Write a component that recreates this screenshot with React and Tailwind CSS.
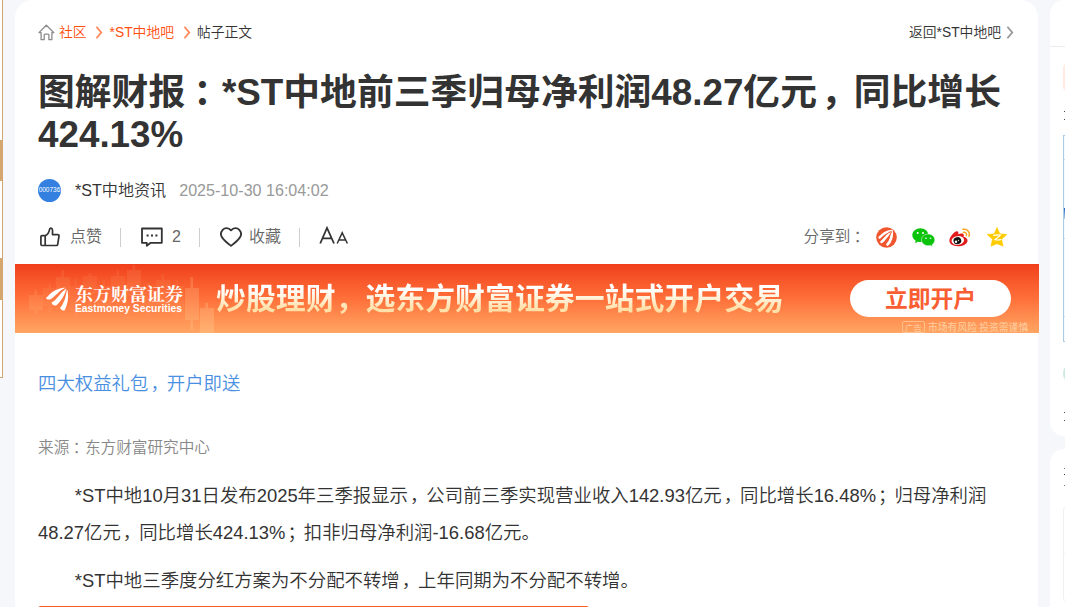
import React from 'react'

// full-width punctuation sits nearer the middle of its box
function Text({ children }) {
  return children.split(/([，：；])/).map((part, i) => {
    if (part === '：') {
      return (
        <span key={i} className="inline-block w-[1em] pl-[0.22em] indent-0 tracking-[-0.22em]">
          {part}
        </span>
      )
    }
    if (part === '，' || part === '；') {
      return (
        <span key={i} className="inline-block w-[1em] pl-[0.11em] indent-0 tracking-[-0.11em]">
          {part}
        </span>
      )
    }
    return part
  })
}

function Chevron({ className }) {
  return (
    <svg viewBox="0 0 8 14" className={className} fill="none" stroke="currentColor" strokeWidth="2">
      <path d="M1.200.8 6.400 7l-5.200 6.200" />
    </svg>
  )
}

function HomeIcon() {
  return (
    <svg viewBox="0 0 17 17" className="w-[17px] h-[17px] -mt-[2px] text-[#8a8a8a]" fill="none" stroke="currentColor" strokeWidth="1.300" strokeLinejoin="round">
      <path d="M1 8.600 8.300 1.200l7.500 7.400h-1.900v7.100h-3V11q0-.9-.9-.9H7.100q-.9 0-.9.9v4.700H3.100V8.600z" />
    </svg>
  )
}

function ThumbIcon() {
  return (
    <svg viewBox="0 0 20 20" className="w-5 h-5" fill="none" stroke="#333" strokeWidth="1.700" strokeLinejoin="round">
      <path d="M5.200 8.600H2.100q-1.200 0-1.200 1.200v7.500q0 1.200 1.200 1.200h14.200q1.200 0 1.400-1.200l1.300-8.300q.1-1.400-1.300-1.400h-5.200V3q-.2-2-1.700-1.900-1.200.1-1.300 1.500C8.900 5.900 7.500 7.800 5.200 8.600zM5.200 8.600v9.900" />
    </svg>
  )
}

function CommentIcon() {
  return (
    <svg viewBox="0 0 22 20" className="w-[22px] h-5" fill="none" stroke="#333" strokeWidth="1.800">
      <path d="M1 1.500h19.800v14.300H9.700L5.800 18.800v-3H1z" strokeLinejoin="round" />
      <path d="M5.600 8.600h2M10 8.600h2M14.400 8.600h2" strokeWidth="2" />
    </svg>
  )
}

function HeartIcon() {
  return (
    <svg viewBox="0 0 22 20" className="w-[22px] h-5" fill="none" stroke="#333" strokeWidth="1.800" strokeLinejoin="round">
      <path d="M11 3.300C8.500.4 4.700.6 2.700 2.800.5 5.200.6 8.600 2.600 11.100 4.700 13.800 7.500 16.200 11 18.900c3.500-2.700 6.300-5.100 8.400-7.800 2-2.500 2.100-5.900-.1-8.300-2-2.200-5.800-2.400-8.300.5z" />
    </svg>
  )
}

function Petals() {
  return (
    <>
      <path d="M0 11C3 8 6 4 12 2.200 15 1 18 .5 19.500.8 13 3.500 9 10 4.500 12.300 2.500 13 .8 12.500 0 11z" />
      <path d="M5.500 15.500C11 13 14 5.500 20.300 1.400c-1 5.500-5 13-10.300 17.100-2 .5-4-1-4.500-3z" />
      <path d="M14 21c4-4 6-12 7-19 2 6 1.500 14-2.500 21.500-1.700.5-3.500-.8-4.500-2.500z" />
    </>
  )
}

function EastmoneyIcon() {
  return (
    <svg viewBox="0 0 21 21" className="w-[21px] h-[21px]">
      <circle cx="10.500" cy="10.500" r="10.300" fill="#f0562d" />
      <g fill="none" stroke="#fff" strokeLinecap="round">
        <path d="M3.500 10.500C6 8.500 9 4.200 15.500 4" strokeWidth="2.300" />
        <path d="M5.500 15C9.500 12 11 7 15.500 4.500" strokeWidth="2.600" />
        <path d="M11.500 17.500C15.500 13.500 16 8 15.800 4.500" strokeWidth="2.600" />
      </g>
      <path d="M4.500 12.500C9 10.500 10 6 15.500 4.300M8.700 16.500C13 12.500 13.500 7.500 15.700 4.600" fill="none" stroke="#f0562d" strokeWidth="1" />
    </svg>
  )
}

function WechatIcon() {
  return (
    <svg viewBox="0 0 23 19" className="w-[23px] h-[19px]">
      <path d="M8.400.2c4.400 0 8 3 8 6.900s-3.600 6.900-8 6.900c-.9 0-1.700-.1-2.500-.3L3 15.200l.7-2.500C1.500 11.400.3 9.400.3 7.100.3 3.200 4 .2 8.400.2z" fill="#0bc30b" />
      <path d="M16.200 6.100c3.800 0 6.600 2.600 6.600 5.800 0 1.900-1 3.500-2.600 4.600l.5 2.100-2.300-1.200c-.7.200-1.400.3-2.200.3-3.800 0-6.700-2.600-6.700-5.800s2.900-5.800 6.700-5.800z" fill="#0bc30b" stroke="#fff" strokeWidth=".5" />
      <g fill="#fff">
        <circle cx="5.700" cy="5" r="1" />
        <circle cx="11" cy="5" r="1" />
        <circle cx="14" cy="10.200" r=".8" />
        <circle cx="18.500" cy="10.200" r=".8" />
      </g>
    </svg>
  )
}

function WeiboIcon() {
  return (
    <svg viewBox="0 0 22 19" className="w-[22px] h-[19px]">
      <path d="M8 3.300c1.500.2 1.700 1.400 1.200 3 2.200-1 5.300-1.200 5.600.6.100.8-.1 1.200-.3 1.900 2.300.6 4.200 1.900 4 4.100-.4 3.200-4.800 5.400-9.500 5.400C4 18.300.4 16.200.4 12.600c0-3.300 4.700-9 7.600-9.300z" fill="#e21b1d" />
      <ellipse cx="8.800" cy="12.500" rx="6.300" ry="4.400" fill="#fff" transform="rotate(-7 8.800 12.500)" />
      <ellipse cx="8.400" cy="12.700" rx="3.900" ry="3.500" fill="#111" transform="rotate(-15 8.400 12.700)" />
      <circle cx="7" cy="13.800" r="1.200" fill="#fff" />
      <circle cx="9.500" cy="12.300" r=".6" fill="#fff" />
      <path d="M14 1.300c4.200-.9 7.400 2.800 6 7M14.400 4.300c2-.4 3.600 1.300 3 3.200" fill="none" stroke="#f6a623" strokeWidth="1.500" strokeLinecap="round" />
    </svg>
  )
}

function QzoneIcon() {
  return (
    <svg viewBox="0 0 20 20" className="w-5 h-5">
      <path d="M10 .4l2.800 6.400 7 .7-5.200 4.700 1.500 7L10 16.700l-6.100 2.500 1.500-7L.2 7.500l7-.7z" fill="#fc0" stroke="#fc0" strokeWidth=".6" strokeLinejoin="round" />
      <path d="M6.200 8.400q4-.9 7.200-.3l-5.400 4.600q3 .7 6.200-.2" fill="none" stroke="#fff" strokeWidth="1.200" />
    </svg>
  )
}

const candles = [
  { x: 14, y: 31, h: 15, top: 26, end: 50, o: 0.13 },
  { x: 28, y: 24, h: 18, top: 20, end: 48, o: 0.08 },
  { x: 41, y: 13, h: 20, top: 6, end: 40, o: 0.09 },
  { x: 54, y: 22, h: 24, top: 15, end: 53, o: 0.06 },
  { x: 68, y: 12, h: 18, top: 9, end: 45, o: 0.07 },
  { x: 82, y: 22, h: 22, top: 16, end: 48, o: 0.06 },
  { x: 96, y: 12, h: 24, top: 6, end: 43, o: 0.08 },
  { x: 112, y: 6, h: 26, top: 1, end: 40, o: 0.1 },
  { x: 126, y: 24, h: 22, top: 19, end: 51, o: 0.06 },
  { x: 141, y: 16, h: 25, top: 10, end: 47, o: 0.08 },
  { x: 155, y: 22, h: 27, top: 16, end: 53, o: 0.06 },
  { x: 170, y: 24, h: 32, top: 13, end: 66, o: 0.22 },
  { x: 185, y: 44, h: 25, top: 39, end: 69, o: 0.25 },
]

function Banner() {
  return (
    <div className="relative flex w-[1024px] h-[69px] shrink-0 overflow-hidden bg-linear-to-b from-[#f03e1b] via-[#ff6f39] to-[#ffa563]">
      <svg viewBox="0 0 210 69" className="absolute left-0 top-0 w-[210px] h-[69px]" fill="#ffd9a0">
        {candles.map((c) => (
          <g key={c.x} opacity={c.o}>
            <rect x={c.x} y={c.y} width="14" height={c.h} />
            <rect x={c.x + 5.5} y={c.top} width="2.500" height={c.end - c.top} />
          </g>
        ))}
      </svg>
      <div className="relative flex w-[201px] pl-[31px] pt-[20px]">
        <svg viewBox="0 0 23 24" className="mt-[3px] w-[23px] h-[24px]" fill="#fff">
          <Petals />
        </svg>
        <div className="ml-[6px] text-white whitespace-nowrap">
          <div className="font-['Noto_Serif_CJK_SC','Noto_Sans_CJK_SC',serif] text-[18px] leading-[18px] font-bold">东方财富证券</div>
          <div className="font-['Liberation_Sans',sans-serif] text-[10.300px] leading-[13px] font-bold">Eastmoney Securities</div>
        </div>
      </div>
      <div className="h-[44px] mt-[10px] w-[634px] whitespace-nowrap bg-linear-to-b from-white from-35% to-[#ffe0a8] to-80% bg-clip-text font-['Noto_Sans_CJK_SC',sans-serif] text-[29.900px] leading-[44px] font-bold text-transparent">
        炒股理财，选东方财富证券一站式开户交易
      </div>
      <div className="flex flex-col">
        <div className="mt-4 flex h-[37px] w-[161px] shrink-0 items-center justify-center rounded-full bg-white font-['Noto_Sans_CJK_SC',sans-serif] text-[22.800px] leading-none font-bold text-[#f95e33]">
          立即开户
        </div>
        <div className="ml-[52px] mt-[4px] flex h-[12px] items-center gap-[3px] whitespace-nowrap font-['Noto_Sans_CJK_SC',sans-serif] text-[9.800px] leading-[12px] font-normal text-[#ffd0a2]">
          <span className="rounded-[2px] border border-[#ffc08c] px-[2px] text-[8.500px] leading-[10px]">广告</span>
          <span>市场有风险 投资需谨慎</span>
        </div>
      </div>
    </div>
  )
}

function Divider() {
  return <span className="h-[19px] w-px bg-[#cfcfcf]" />
}

function Toolbar() {
  return (
    <div className="mx-[23px] mt-[20px] flex h-[30px] items-center text-[16px] leading-[30px] text-[#666]">
      <div className="flex w-[82px] items-center gap-[10px] pl-[2px]">
        <ThumbIcon />
        点赞
      </div>
      <Divider />
      <div className="flex w-[78px] items-center gap-[9px] pl-[20px]">
        <CommentIcon />2
      </div>
      <Divider />
      <div className="flex w-[99px] items-center gap-[7px] pl-[20px]">
        <HeartIcon />
        收藏
      </div>
      <Divider />
      <svg viewBox="0 0 30 19" className="ml-[19px] -mt-[3px] h-[19px] w-[30px] overflow-visible" fill="none" stroke="#333" strokeWidth="1.800">
        <path d="M1.200 17.500 8 2l7 15.500M3.500 12.300h9.200" />
        <path d="M18.200 17.500 23.200 6.800l5.200 10.700M20 14h6.500" strokeWidth="1.500" />
      </svg>
      <div className="ml-auto mr-[8px] flex items-center">
        <span className="mr-[10px] text-[15.600px]">
          <Text>分享到：</Text>
        </span>
        <EastmoneyIcon />
        <span className="ml-[15px]">
          <WechatIcon />
        </span>
        <span className="ml-[14px]">
          <WeiboIcon />
        </span>
        <span className="ml-[16px]">
          <QzoneIcon />
        </span>
      </div>
    </div>
  )
}

function Post() {
  return (
    <main className="ml-[12px] flex h-[640px] w-[1023px] shrink-0 flex-col rounded-t-[18px] bg-white">
      <nav className="mx-[23px] mt-[22px] flex h-[22px] items-center text-[13.800px] leading-[22px] text-[#ff4f0f]">
        <HomeIcon />
        <a className="ml-[4px]">社区</a>
        <Chevron className="ml-[8px] -mt-[2px] h-[13px] w-[8px] text-[#ff8a5c]" />
        <a className="ml-[7px]">*ST中地吧</a>
        <Chevron className="ml-[9px] -mt-[2px] h-[13px] w-[8px] text-[#ff8a5c]" />
        <span className="ml-[6px] text-[#333]">帖子正文</span>
        <a className="ml-auto text-[#333]">返回*ST中地吧</a>
        <Chevron className="ml-[5px] mr-px -mt-[2px] h-[13px] w-[8px] text-[#999]" />
      </nav>

      <h1 className="mx-[23px] mt-[28px] h-[84px] text-[36.800px] leading-[42px] font-bold text-[#333]">
        <Text>图解财报：*ST中地前三季归母净利润48.27亿元，同比增长</Text>
        <br />
        424.13%
      </h1>

      <div className="mx-[23px] mt-[22px] flex h-[24px] items-center text-[16.100px] leading-[24px]">
        <div className="flex h-[23px] w-[23px] items-center justify-center overflow-hidden rounded-full bg-[#3380e0] text-[6.500px] leading-none text-white">
          000736
        </div>
        <span className="ml-[14px] text-[#333]">*ST中地资讯</span>
        <span className="ml-[13px] text-[#999]">2025-10-30 16:04:02</span>
      </div>

      <Toolbar />

      <div className="mt-[12px] flex">
        <Banner />
      </div>

      <div className="mx-[23px] text-[18.400px] leading-[36.800px] text-[#333]">
        <p className="mt-[33px] text-[#4a90e2]">
          <Text>四大权益礼包，开户即送</Text>
        </p>
        <p className="mt-[33px] h-[24px] text-[15.640px] leading-[24px] text-[#888]">
          <Text>来源：东方财富研究中心</Text>
        </p>
        <p className="mt-[18px] whitespace-nowrap indent-[36.800px]">
          <Text>*ST中地10月31日发布2025年三季报显示，公司前三季实现营业收入142.93亿元，同比增长16.48%；归母净利润</Text>
          <br />
          <Text>48.27亿元，同比增长424.13%；扣非归母净利润-16.68亿元。</Text>
        </p>
        <p className="mt-[11.500px] indent-[36.800px]">
          <Text>*ST中地三季度分红方案为不分配不转增，上年同期为不分配不转增。</Text>
        </p>
        <div className="mt-[6.500px] h-[20px] w-[551px] rounded-[3px] bg-[#ff5a1f]" />
      </div>
    </main>
  )
}

// floating column at the left edge of the window
function LeftRail() {
  return (
    <aside className="h-[378px] w-[3px] shrink-0 border-r border-b border-[#d3a671] bg-white pt-[140px]">
      <div className="h-[41px] bg-[#d5a66d]" />
      <div className="mt-[77px] h-[42px] bg-[#d5a66d]" />
    </aside>
  )
}

function RightRail() {
  return (
    <aside className="ml-[12px] flex w-[300px] shrink-0 flex-col">
      <section className="h-[436px] shrink-0 rounded-[14px] bg-white">
        <div className="h-[47px] border-b border-[#e9ebee]" />
        <div className="ml-[13px] mt-[17px] h-[27px] w-[100px] rounded-[4px] bg-[#ffebe2]" />
        <div className="ml-[14px] mt-[20px] h-px w-[20px] bg-[#444]" />
        <div className="ml-[14px] mt-[7px] h-px w-[20px] bg-[#444]" />
        <div className="ml-[13px] mt-[15px] h-[207px] w-[270px] border border-[#a9cbe4] bg-[#f5faff]">
          <div className="h-[24px] border-b border-[#c9dfee]" />
          <div className="mt-[48px] h-[11px] bg-linear-to-b from-[#1f64c8] to-[#b9cfe6]" />
          <div className="h-[20px] border-b border-[#c9dfee]" />
          <div className="h-[78px] border-b border-[#c9dfee]" />
        </div>
        <div className="ml-[13px] mt-[20px] h-[23px] w-[23px] rounded-full bg-[#cfe8df]" />
        <div className="ml-[14px] mt-[27px] h-px w-[20px] bg-[#444]" />
        <div className="ml-[14px] mt-[7px] h-px w-[20px] bg-[#444]" />
      </section>
      <section className="mt-[13px] h-[200px] shrink-0 rounded-[14px] bg-white pt-[19px]">
        <div className="ml-[14px] h-px w-[20px] bg-[#777]" />
        <div className="ml-[14px] mt-[5px] h-px w-[20px] bg-[#333]" />
        <div className="ml-[14px] mt-[10px] h-px w-[20px] bg-[#777]" />
        <div className="ml-[13px] mt-[20px] h-[96px] w-[270px] rounded-[4px] border border-[#eef0f2]">
          <div className="h-[47px] border-b border-[#eef0f2]" />
        </div>
      </section>
    </aside>
  )
}

export default function App() {
  return (
    <div className="flex h-[607px] w-[1065px] overflow-hidden bg-[#f5f7fa] font-['Liberation_Sans','Noto_Sans_CJK_SC',sans-serif] font-[350]">
      <LeftRail />
      <Post />
      <RightRail />
    </div>
  )
}
